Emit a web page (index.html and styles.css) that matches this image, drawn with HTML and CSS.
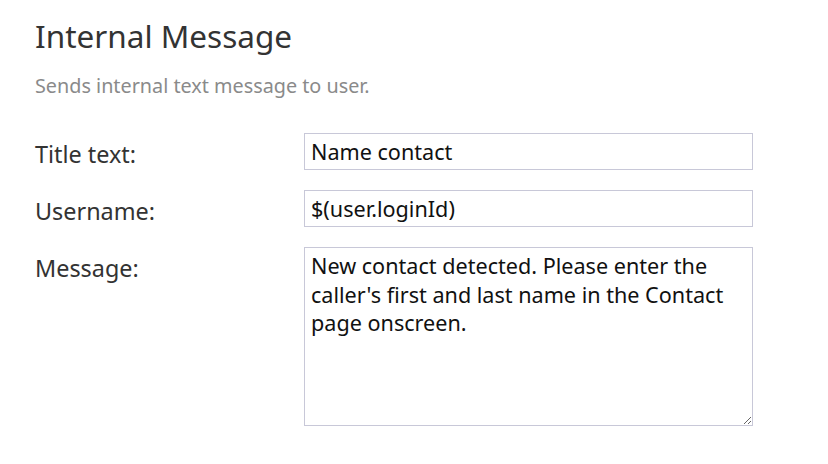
FILE: index.html
```html
<!DOCTYPE html>
<html>
<head>
<meta charset="utf-8">
<link rel="stylesheet" href="styles.css">
</head>
<body>
<div class="panel">
  <h1 class="title">Internal Message</h1>
  <p class="desc">Sends internal text message to user.</p>
  <div class="form">
    <label class="label">Title text:</label>
    <input class="field" type="text" value="Name contact">
    <label class="label">Username:</label>
    <input class="field" type="text" value="$(user.loginId)">
    <label class="label">Message:</label>
    <textarea class="field area">New contact detected. Please enter the caller's first and last name in the Contact page onscreen.</textarea>
  </div>
</div>
</body>
</html>
```
FILE: styles.css
```css
html, body {
  margin: 0;
  padding: 0;
  background: #ffffff;
}
body {
  font-family: "Noto Sans", sans-serif;
  color: #333333;
}
.panel {
  padding: 14px 0 0 35px;
}
.title {
  margin: 0;
  font-size: 31.5px;
  font-weight: 400;
  line-height: 44px;
  color: #333333;
}
.desc {
  margin: 15px 0 0 0;
  font-size: 19.8px;
  line-height: 26px;
  color: #8a8a8a;
}
.form {
  display: grid;
  grid-template-columns: 269px 449px;
  row-gap: 20px;
  margin-top: 34px;
}
.label {
  padding-top: 6px;
  font-size: 23.4px;
  line-height: 31px;
  color: #333333;
}
.field {
  box-sizing: border-box;
  width: 449px;
  height: 37px;
  margin: 0;
  border: 1px solid #c8c8d8;
  border-radius: 0;
  padding: 0 6px;
  font-family: "Noto Sans", sans-serif;
  font-size: 21.6px;
  color: #111111;
  background: #ffffff;
  outline: none;
}
.area {
  height: 179px;
  padding: 4px 6px;
  line-height: 28.5px;
  resize: vertical;
}
```
